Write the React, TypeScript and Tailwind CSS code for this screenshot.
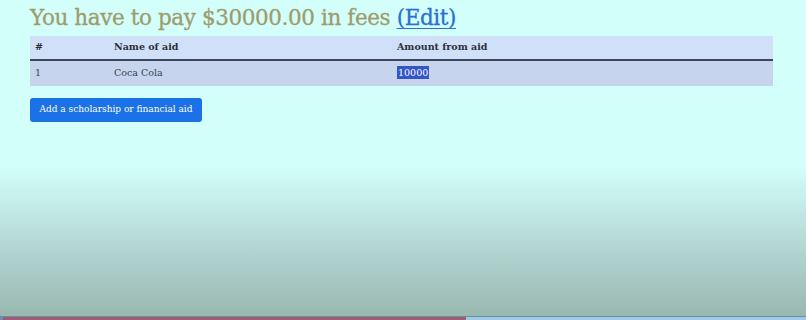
export default function App() {
  return (
    <div className="relative h-[320px] w-[806px] overflow-hidden bg-[#d3fffb] font-['DejaVu_Serif',serif]">
      <div className="px-[30px] pt-[3px]">
        <h1 className="text-[21.5px] leading-[30px] tracking-[-0.4px] text-[#9e9c6c] [-webkit-text-stroke:0.3px_#9e9c6c]">
          You have to pay $30000.00 in fees{" "}
          <a href="#" className="text-[#2a6fd1] underline decoration-1 underline-offset-[3px] [-webkit-text-stroke:0.3px_#2a6fd1]">
            (Edit)
          </a>
        </h1>
        <table className="mt-[3px] w-[743px] border-collapse text-left text-[9.5px] text-[#2c2f3a]">
          <thead>
            <tr className="h-[24px] border-b-2 border-[#3b4658] bg-[#cfe0f8]">
              <th className="w-[84px] pl-[5px] font-bold">#</th>
              <th className="w-[283px] font-bold">Name of aid</th>
              <th className="font-bold">Amount from aid</th>
            </tr>
          </thead>
          <tbody>
            <tr className="h-[26px] bg-[#c6d5ed] text-[#3a3f4d]">
              <td className="pl-[5px]">1</td>
              <td>Coca Cola</td>
              <td>
                <span className="bg-[#3455c6] px-[1px] py-[1px] text-white">10000</span>
              </td>
            </tr>
          </tbody>
        </table>
        <button className="mt-[12px] h-[24px] w-[172px] rounded-[3px] bg-[#1b72e6] text-[9px] text-white">
          Add a scholarship or financial aid
        </button>
      </div>
      <div className="pointer-events-none absolute inset-x-0 bottom-0 h-[155px] bg-gradient-to-b from-[#d3fffb]/0 via-[#b6d9d6] to-[#97b6ad]" />
      <div className="absolute inset-x-0 bottom-0 flex h-[4px] flex-col">
        <div className="h-[1px] bg-[#5b92bb]" />
        <div className="flex flex-1">
          <div className="w-[3px] bg-[#6f8fa5]" />
          <div className="w-[463px] bg-[#a35c6b]" />
          <div className="flex-1 bg-[#a3c9dc]" />
        </div>
      </div>
    </div>
  );
}
